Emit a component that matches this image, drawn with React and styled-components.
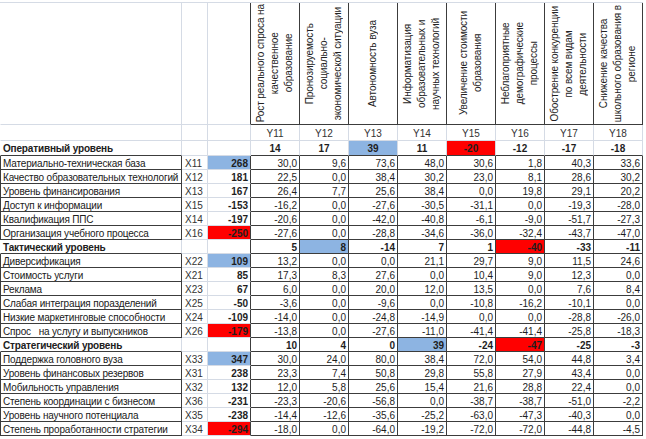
import React from 'react';
import styled, { createGlobalStyle } from 'styled-components';

const DARK = '#3c3c3c';
const GRID = '#d5dbe5';
const FILLS = { blue: '#8db4e2', red: '#ff0000' };

const GlobalStyle = createGlobalStyle`
  body {
    margin: 0;
    background: #ffffff;
    font-family: "Liberation Sans", Arial, sans-serif;
  }
`;

const Sheet = styled.div`
  display: grid;
  grid-template-columns: 182px 26px 43px repeat(8, 49px);
  grid-template-rows: 122px 16px 15px repeat(20, 14px);
  margin-top: 2px;
  width: max-content;
  border-top: 1px solid ${GRID};
  font-size: 10px;
  color: #1e1e1e;
`;

// базовая ячейка таблицы
const Cell = styled.div`
  box-sizing: border-box;
  display: flex;
  align-items: center;
  justify-content: ${(p) =>
    p.$align === 'center' ? 'center' : p.$align === 'left' ? 'flex-start' : 'flex-end'};
  padding: 1px 2px 0;
  border-right: 1px solid ${(p) => (p.$darkRight ? DARK : GRID)};
  border-bottom: 1px solid ${(p) => (p.$darkBottom ? DARK : GRID)};
  background: ${(p) => FILLS[p.$fill] || 'transparent'};
  font-weight: ${(p) => (p.$bold ? 700 : 400)};
  white-space: pre;
  overflow: hidden;
`;

const LabelCell = styled(Cell)`
  border-left: 1px solid ${(p) => (p.$boxed ? DARK : 'transparent')};
  padding-left: 2px;
  letter-spacing: -0.17px;
  color: #202020;
`;

const CodeCell = styled(Cell)`
  justify-content: flex-start;
  padding-left: 3px;
  color: #333;
`;

const HeadCell = styled.div`
  box-sizing: border-box;
  display: flex;
  align-items: center;
  justify-content: center;
  border-right: 1px solid ${DARK};
  border-bottom: 1px solid ${DARK};
  overflow: hidden;
`;

const HeadText = styled.span`
  writing-mode: vertical-rl;
  transform: rotate(180deg);
  text-align: center;
  line-height: 14px;
  letter-spacing: -0.1px;
  white-space: nowrap;
  color: #222;
`;

const YLabel = styled(Cell)`
  color: #333;
`;

const headers = [
  ['Рост реального спроса на', 'качественное', 'образование'],
  ['Пронозируемость', 'социально-', 'экономической ситуации'],
  ['Автономность вуза'],
  ['Информатизация', 'образовательных и', 'научных технологий'],
  ['Увеличение стоимости', 'образования'],
  ['Неблагоприятные', 'демографические', 'процессы'],
  ['Обострение конкуренции', 'по всем видам', 'деятельности'],
  ['Снижение качества', 'школьного образования в', 'регионе'],
];

const sections = [
  {
    title: 'Оперативный уровень',
    totals: ['14', '17', '39', '11', '-20', '-12', '-17', '-18'],
    best: 2,
    worst: 4,
    centered: true,
    rows: [
      ['Материально-техническая база', 'X11', '268', ['30,0', '9,6', '73,6', '48,0', '30,6', '1,8', '40,3', '33,6']],
      ['Качество образовательных технологий', 'X12', '181', ['22,5', '0,0', '38,4', '30,2', '23,0', '8,1', '28,6', '30,2']],
      ['Уровень финансирования', 'X13', '167', ['26,4', '7,7', '25,6', '38,4', '0,0', '19,8', '29,1', '20,2']],
      ['Доступ к информации', 'X15', '-153', ['-16,2', '0,0', '-27,6', '-30,5', '-31,1', '0,0', '-19,3', '-28,0']],
      ['Квалификация ППС', 'X14', '-197', ['-20,6', '0,0', '-42,0', '-40,8', '-6,1', '-9,0', '-51,7', '-27,3']],
      ['Организация учебного процесса', 'X16', '-250', ['-27,6', '0,0', '-28,8', '-34,6', '-36,0', '-32,4', '-43,7', '-47,0']],
    ],
  },
  {
    title: 'Тактический уровень',
    totals: ['5', '8', '-14', '7', '1', '-40', '-33', '-11'],
    best: 1,
    worst: 5,
    rows: [
      ['Диверсификация', 'X22', '109', ['13,2', '0,0', '0,0', '21,1', '29,7', '9,0', '11,5', '24,6']],
      ['Стоимость услуги', 'X21', '85', ['17,3', '8,3', '27,6', '0,0', '10,4', '9,0', '12,3', '0,0']],
      ['Реклама', 'X23', '67', ['6,0', '0,0', '20,0', '12,0', '13,5', '0,0', '7,6', '8,4']],
      ['Слабая интеграция поразделений', 'X25', '-50', ['-3,6', '0,0', '-9,6', '0,0', '-10,8', '-16,2', '-10,1', '0,0']],
      ['Низкие маркетинговые способности', 'X24', '-109', ['-14,0', '0,0', '-24,8', '-14,9', '0,0', '0,0', '-28,8', '-26,0']],
      ['Спрос   на услугу и выпускников', 'X26', '-179', ['-13,8', '0,0', '-27,6', '-11,0', '-41,4', '-41,4', '-25,8', '-18,3']],
    ],
  },
  {
    title: 'Стратегический уровень',
    totals: ['10', '4', '0', '39', '-24', '-47', '-25', '-3'],
    best: 3,
    worst: 5,
    rows: [
      ['Поддержка головного вуза', 'X33', '347', ['30,0', '24,0', '80,0', '38,4', '72,0', '54,0', '44,8', '3,4']],
      ['Уровень финансовых резервов', 'X31', '238', ['23,3', '7,4', '50,8', '29,8', '55,8', '27,9', '43,4', '0,0']],
      ['Мобильность управления', 'X32', '132', ['12,0', '5,8', '25,6', '15,4', '21,6', '28,8', '22,4', '0,0']],
      ['Степень координации с бизнесом', 'X36', '-231', ['-23,3', '-20,6', '-56,8', '0,0', '-38,7', '-38,7', '-51,0', '-2,2']],
      ['Уровень научного потенциала', 'X35', '-238', ['-14,4', '-12,6', '-35,6', '-25,2', '-63,0', '-47,3', '-40,3', '0,0']],
      ['Степень проработанности стратегии', 'X34', '-294', ['-18,0', '0,0', '-64,0', '-19,2', '-72,0', '-72,0', '-44,8', '-4,5']],
    ],
  },
];

function Section({ section }) {
  const boxed = !section.centered;
  return (
    <>
      <LabelCell $align="left" $bold $darkBottom>
        {section.title}
      </LabelCell>
      <CodeCell />
      <Cell $darkRight={boxed} />
      {section.totals.map((v, i) => (
        <Cell
          key={i}
          $bold
          $align={section.centered ? 'center' : 'right'}
          $darkRight={boxed}
          $darkBottom
          $fill={i === section.best ? 'blue' : i === section.worst ? 'red' : undefined}
        >
          {v}
        </Cell>
      ))}
      {section.rows.map(([label, code, value, values], r) => (
        <React.Fragment key={code}>
          <LabelCell $align="left" $boxed $darkRight $darkBottom>
            {label}
          </LabelCell>
          <CodeCell>{code}</CodeCell>
          <Cell
            $bold
            $darkRight
            $fill={r === 0 ? 'blue' : r === section.rows.length - 1 ? 'red' : undefined}
          >
            {value}
          </Cell>
          {values.map((v, i) => (
            <Cell key={i} $darkRight $darkBottom>
              {v}
            </Cell>
          ))}
        </React.Fragment>
      ))}
    </>
  );
}

export default function App() {
  return (
    <>
      <GlobalStyle />
      <Sheet>
        <LabelCell />
        <CodeCell />
        <Cell $darkRight />
        {headers.map((lines, i) => (
          <HeadCell key={i}>
            <HeadText>
              {lines.map((line, j) => (
                <React.Fragment key={j}>
                  {j > 0 && <br />}
                  {line}
                </React.Fragment>
              ))}
            </HeadText>
          </HeadCell>
        ))}

        <LabelCell />
        <CodeCell />
        <Cell />
        {headers.map((_, i) => (
          <YLabel key={i} $align="center">
            Y{11 + i}
          </YLabel>
        ))}

        {sections.map((s) => (
          <Section key={s.title} section={s} />
        ))}
      </Sheet>
    </>
  );
}
